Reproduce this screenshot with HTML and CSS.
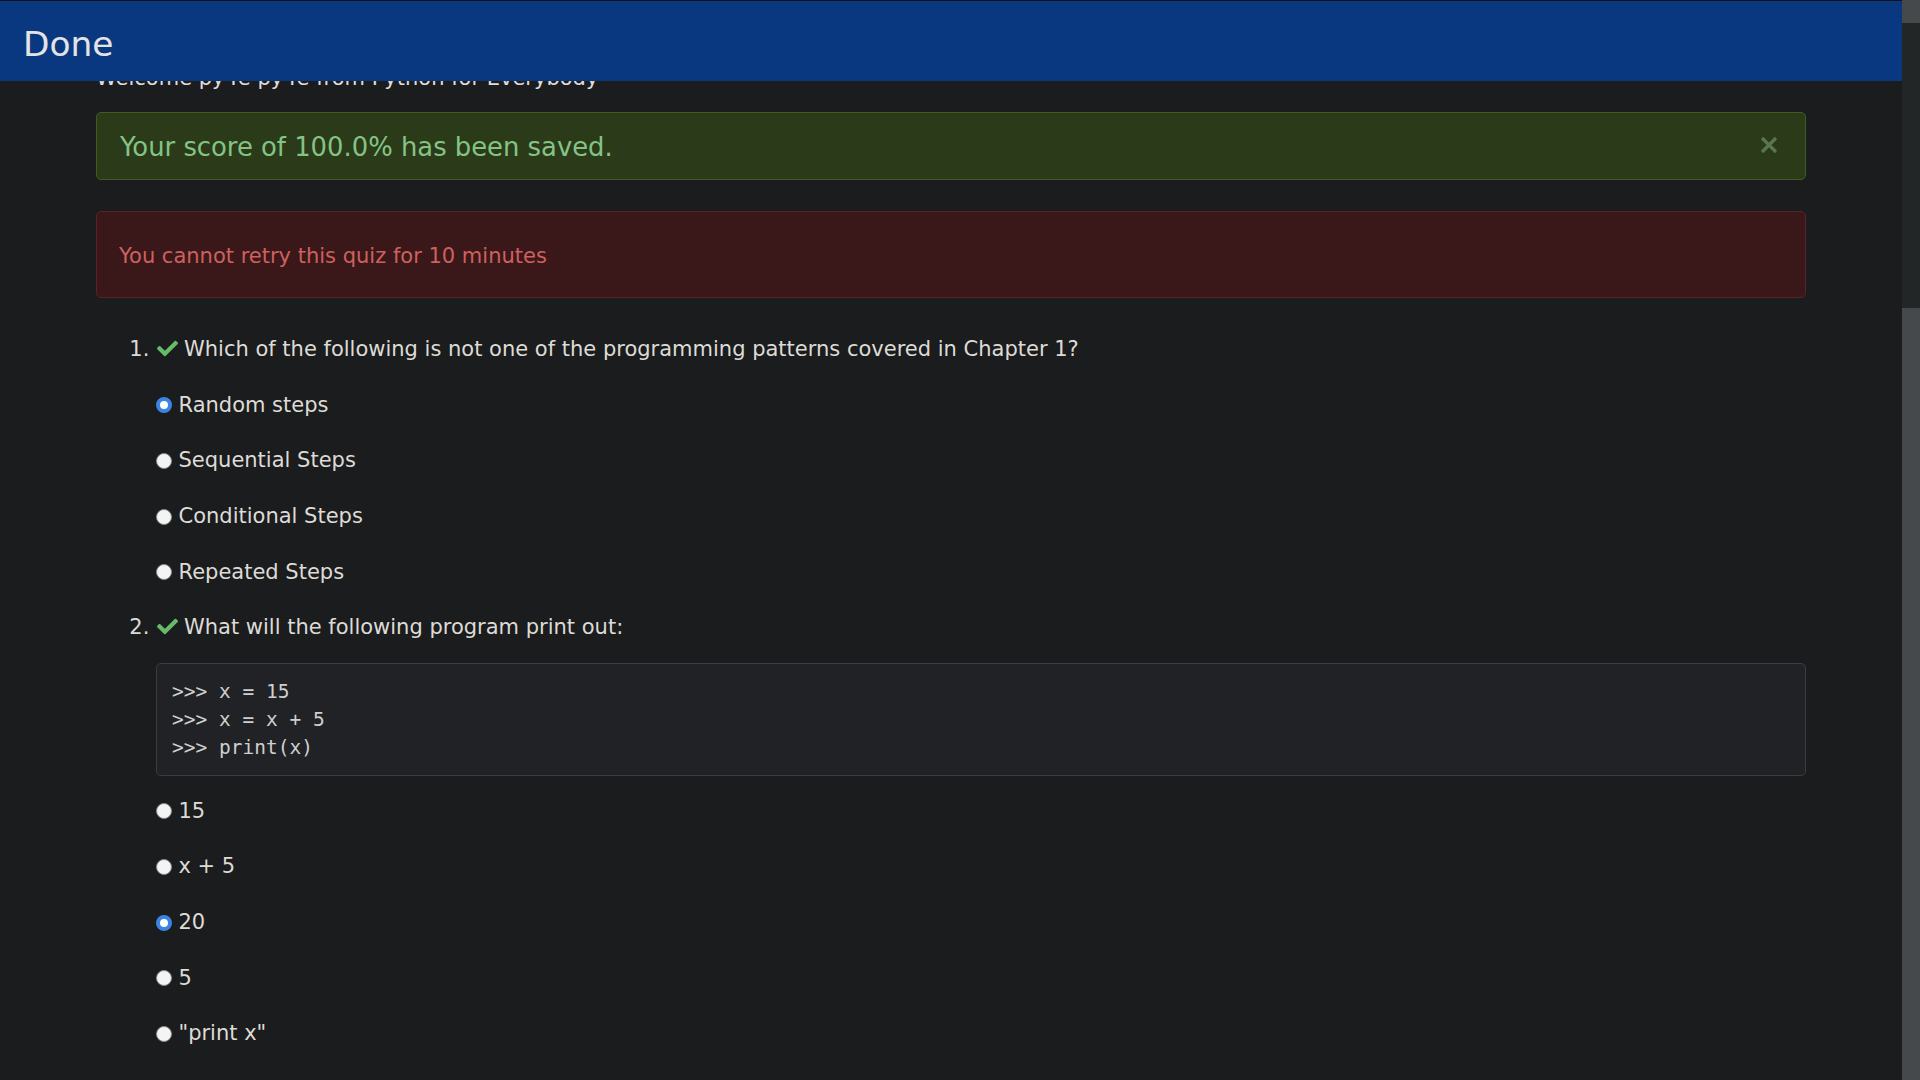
FILE: index.html
```html
<!DOCTYPE html>
<html lang="en">
<head>
<meta charset="utf-8">
<title>Done</title>
<link rel="stylesheet" href="styles.css">
</head>
<body>
<div class="viewport">
  <header class="topbar"><h1 class="title">Done</h1></header>
  <main class="container">
    <p class="welcome">Welcome py4e py4e from Python for Everybody</p>
    <div class="alert alert-success">
      Your score of 100.0% has been saved.
      <button class="close" aria-label="Close">
        <svg viewBox="0 0 18 18" width="18" height="18"><path d="M2 2 L16 16 M16 2 L2 16" stroke="currentColor" stroke-width="3.2" stroke-linecap="butt" fill="none"/></svg>
      </button>
    </div>
    <div class="alert alert-danger">You cannot retry this quiz for 10 minutes</div>
    <ol class="quiz">
      <li>
        <p class="q"><svg class="check" viewBox="0 0 512 512"><path d="M173.898 439.404l-166.4-166.4c-9.997-9.997-9.997-26.206 0-36.204l36.203-36.204c9.997-9.998 26.207-9.998 36.204 0L192 312.69 432.095 72.596c9.997-9.997 26.207-9.997 36.204 0l36.203 36.204c9.997 9.997 9.997 26.206 0 36.204l-294.4 294.401c-9.998 9.997-26.207 9.997-36.204-.001z"/></svg>Which of the following is not one of the programming patterns covered in Chapter 1?</p>
        <label class="opt"><span class="radio checked"></span>Random steps</label>
        <label class="opt"><span class="radio"></span>Sequential Steps</label>
        <label class="opt"><span class="radio"></span>Conditional Steps</label>
        <label class="opt"><span class="radio"></span>Repeated Steps</label>
      </li>
      <li>
        <p class="q q-code"><svg class="check" viewBox="0 0 512 512"><path d="M173.898 439.404l-166.4-166.4c-9.997-9.997-9.997-26.206 0-36.204l36.203-36.204c9.997-9.998 26.207-9.998 36.204 0L192 312.69 432.095 72.596c9.997-9.997 26.207-9.997 36.204 0l36.203 36.204c9.997 9.997 9.997 26.206 0 36.204l-294.4 294.401c-9.998 9.997-26.207 9.997-36.204-.001z"/></svg>What will the following program print out:</p>
        <pre class="code">&gt;&gt;&gt; x = 15
&gt;&gt;&gt; x = x + 5
&gt;&gt;&gt; print(x)</pre>
        <label class="opt"><span class="radio"></span>15</label>
        <label class="opt"><span class="radio"></span>x + 5</label>
        <label class="opt"><span class="radio checked"></span>20</label>
        <label class="opt"><span class="radio"></span>5</label>
        <label class="opt"><span class="radio"></span>"print x"</label>
      </li>
    </ol>
  </main>
</div>
<div class="scrollbar">
  <div class="sb-btn"></div>
  <div class="sb-track"></div>
  <div class="sb-thumb"></div>
</div>
</body>
</html>
```

FILE: styles.css
```css
html, body {
  margin: 0;
  padding: 0;
  height: 100%;
}
body {
  display: flex;
  background: #1b1c1e;
  color: #dddad5;
  font-family: "DejaVu Sans", "Noto Sans", sans-serif;
  font-size: 21px;
  line-height: 31.2px;
  overflow: hidden;
}
.viewport {
  flex: 1;
  min-width: 0;
  height: 1080px;
  overflow: hidden;
}
.topbar {
  position: fixed;
  top: 0;
  left: 0;
  right: 18px;
  height: 80px;
  border-top: 1px solid #111214;
  background: #0a3880;
  display: flex;
  align-items: center;
  z-index: 5;
}
.title {
  margin: 5px 0 0 23px;
  font-size: 34.4px;
  line-height: 40px;
  font-weight: normal;
  color: #e4e4e6;
}
.container {
  max-width: 1710px;
  margin: 0 auto;
  padding-top: 62.5px;
}
.welcome {
  margin: 0 0 18.5px;
  color: #e0ddd8;
}
.alert {
  position: relative;
  border-radius: 5px;
  border: 1px solid transparent;
}
.alert-success {
  background: #2b3a18;
  border-color: #3f5d20;
  color: #83c486;
  font-size: 25.85px;
  line-height: 39px;
  padding: 14.5px 70px 12.5px 23px;
  margin-bottom: 31px;
}
.close {
  position: absolute;
  top: 23px;
  right: 27px;
  width: 18px;
  height: 18px;
  padding: 0;
  border: 0;
  background: none;
  color: #587650;
  display: flex;
}
.alert-danger {
  background: #3a1719;
  border-color: #5a2227;
  color: #cc615f;
  padding: 28.5px 22px 25.5px;
  margin-bottom: 35.8px;
}
.quiz {
  margin: 0;
  padding-left: 60px;
}
.q {
  margin: 0 0 24.4px;
  color: #dedbd6;
}
.q-code {
  margin-bottom: 20px;
}
.check {
  width: 21px;
  height: 21px;
  fill: #66bb6a;
  vertical-align: -3px;
  margin: 0 6px 0 1px;
}
.opt {
  display: flex;
  align-items: center;
  height: 31.2px;
  margin-bottom: 24.4px;
  color: #dedbd6;
}
.radio {
  box-sizing: border-box;
  width: 16px;
  height: 16px;
  border-radius: 50%;
  background: #f4f4f4;
  border: 1px solid #8a8a8a;
  margin-right: 6.5px;
  flex: none;
}
.radio.checked {
  border: 4.5px solid #3b84e3;
  background: #ffffff;
}
.code {
  margin: 0 0 20px;
  padding: 13.25px 15px;
  border: 1px solid #3a3d41;
  border-radius: 5px;
  background: #202225;
  color: #cfcfcf;
  font-family: "DejaVu Sans Mono", "Liberation Mono", monospace;
  font-size: 19.5px;
  line-height: 28px;
}
.scrollbar {
  width: 18px;
  height: 1080px;
  flex: none;
  display: flex;
  flex-direction: column;
  background: #222627;
}
.sb-btn {
  height: 23px;
  background: #45494c;
}
.sb-track {
  height: 285px;
}
.sb-thumb {
  flex: 1;
  background: #45494c;
}
```
